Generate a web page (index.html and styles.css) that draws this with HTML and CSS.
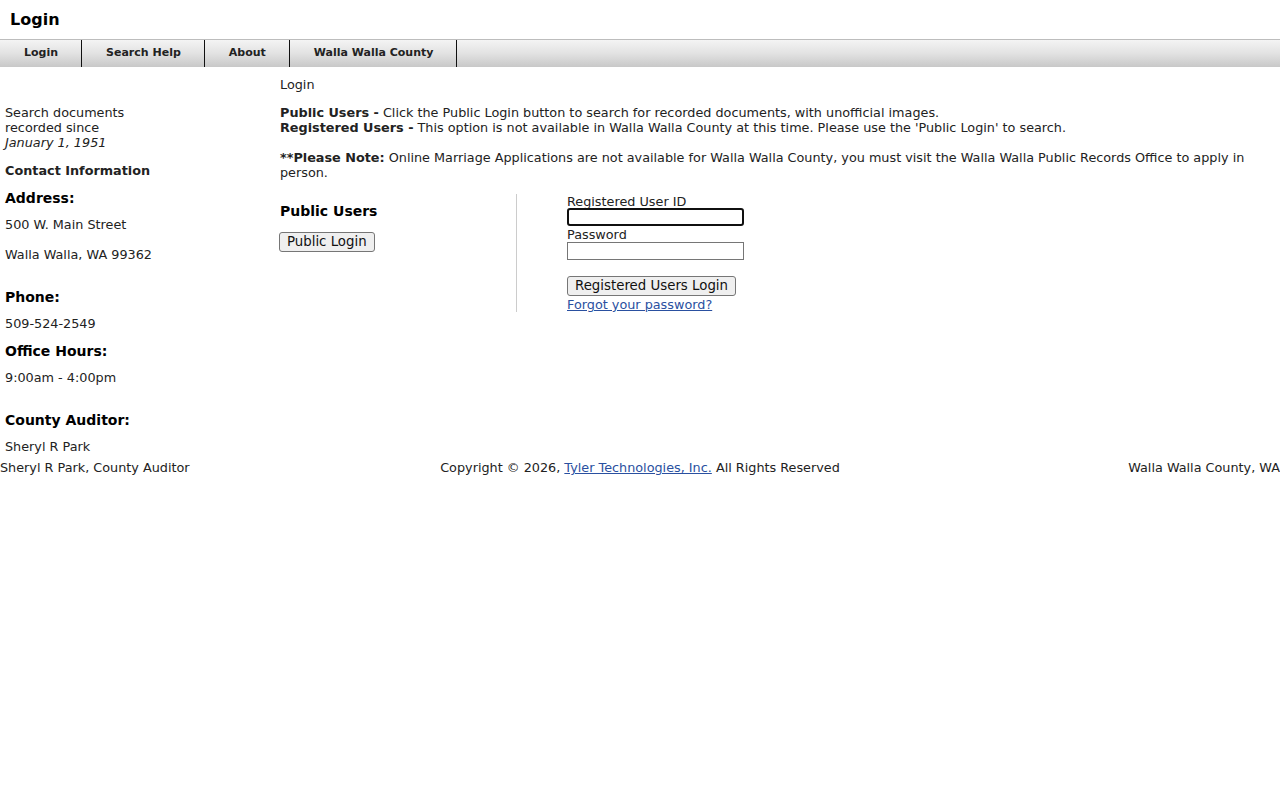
FILE: index.html
```html
<!DOCTYPE html>
<html>
<head>
    <title>Login</title>
    <link rel="stylesheet" href="styles.css">
</head>
<body>
    <div class="page-title">Login</div>
    <ul class="nav">
        <li>Login</li>
        <li>Search Help</li>
        <li>About</li>
        <li>Walla Walla County</li>
    </ul>
    <div class="layout">
        <div class="sidebar">
            <p class="since">Search documents<br>recorded since<br><i>January 1, 1951</i></p>
            <p class="contact">Contact Information</p>
            <h3 class="h-address">Address:</h3>
            <p class="info">500 W. Main Street</p>
            <p class="info">Walla Walla, WA 99362</p>
            <h3 class="h-phone">Phone:</h3>
            <p class="info">509-524-2549</p>
            <h3 class="h-hours">Office Hours:</h3>
            <p class="info">9:00am - 4:00pm</p>
            <h3 class="h-auditor">County Auditor:</h3>
            <p class="info">Sheryl R Park</p>
        </div>
        <div class="main">
            <div class="crumb">Login</div>
            <p class="intro">
                <b>Public Users -</b> Click the Public Login button to search for recorded documents, with unofficial images.<br>
                <b>Registered Users -</b> This option is not available in Walla Walla County at this time. Please use the 'Public Login' to search.<br>
                <br>
                <b>**Please Note:</b> Online Marriage Applications are not available for Walla Walla County, you must visit the Walla Walla Public Records Office to apply in person.
            </p>
            <div class="login-box">
                <div class="public-col">
                    <h3>Public Users</h3>
                    <button class="btn btn-public">Public Login</button>
                </div>
                <div class="registered-col">
                    <label for="userid">Registered User ID</label>
                    <input type="text" id="userid" class="field focused">
                    <label for="pass">Password</label>
                    <input type="password" id="pass" class="field">
                    <button class="btn btn-reg">Registered Users Login</button>
                    <a href="#" class="forgot">Forgot your password?</a>
                </div>
            </div>
        </div>
    </div>
    <div class="footer">
        <span class="foot-left">Sheryl R Park, County Auditor</span>
        <span class="copy">Copyright &copy; 2026, <a href="#">Tyler Technologies, Inc.</a> All Rights Reserved</span>
        <span class="foot-right">Walla Walla County, WA</span>
    </div>
</body>
</html>
```

FILE: styles.css
```css
body {
    margin: 0;
    font-family: "DejaVu Sans", Verdana, sans-serif;
    font-size: 12.8px;
    line-height: 15px;
    color: #222;
    background-color: #fff;
}

.page-title {
    font-size: 16px;
    font-weight: bold;
    color: #000;
    padding: 10px 10px 0 10px;
    height: 39px;
    line-height: 19px;
    box-sizing: border-box;
}

.nav {
    list-style: none;
    margin: 0;
    padding: 0;
    display: flex;
    height: 28px;
    box-sizing: border-box;
    border-top: 1px solid #bdbdbd;
    background: linear-gradient(to bottom, #f4f4f4 0%, #e2e2e2 50%, #c8c8c8 100%);
}

.nav li {
    padding: 0 23px 0 24px;
    font-size: 11px;
    font-weight: bold;
    color: #222;
    line-height: 26px;
    border-right: 1px solid #111;
}

.layout {
    display: flex;
}

.sidebar {
    width: 275px;
    padding-left: 5px;
    flex-shrink: 0;
}

.sidebar p,
.sidebar h3 {
    margin: 0;
}

.sidebar .since {
    margin-top: 38px;
}

.sidebar .contact {
    font-weight: bold;
    margin-top: 13px;
}

.sidebar h3 {
    font-size: 14px;
    line-height: 18px;
    color: #000;
}

.sidebar .info {
    margin-top: 10px;
}

.sidebar .info + .info {
    margin-top: 15px;
}

.sidebar .h-address {
    margin-top: 11px;
}

.sidebar .h-phone {
    margin-top: 26px;
}

.sidebar .h-hours {
    margin-top: 11px;
}

.sidebar .h-auditor {
    margin-top: 26px;
}

.main {
    flex: 1;
    padding-top: 10px;
    padding-right: 20px;
}

.crumb {
    margin-bottom: 13px;
}

.intro {
    margin: 0;
}

.login-box {
    display: flex;
    margin-top: 14px;
}

.public-col {
    width: 236px;
    border-right: 1px solid #ccc;
    padding-top: 8px;
}

.public-col h3 {
    margin: 0 0 12px 0;
    font-size: 14px;
    line-height: 18px;
    color: #000;
}

.btn {
    font-family: "DejaVu Sans", Verdana, sans-serif;
    font-size: 13.33px;
    color: #111;
    background-color: #efefef;
    border: 1px solid #767676;
    border-radius: 3px;
    padding: 1px 7px;
    height: 20px;
    line-height: 16px;
}

.btn-public {
    margin-left: -1px;
}

.registered-col {
    padding-left: 50px;
    display: flex;
    flex-direction: column;
    align-items: flex-start;
}

.registered-col label {
    line-height: 15px;
}

.field {
    width: 177px;
    height: 18px;
    box-sizing: border-box;
    border: 1px solid #767676;
    margin: 0;
    padding: 1px 2px;
}

.field.focused {
    border: 2px solid #101010;
    border-radius: 3px;
    margin-top: -1px;
    margin-bottom: 1px;
}

.btn-reg {
    margin-top: 16px;
}

.forgot {
    color: #2a50a0;
    margin-top: 1px;
}

.footer {
    display: grid;
    grid-template-columns: 1fr auto 1fr;
    margin-top: 6px;
    line-height: 15px;
}

.foot-right {
    text-align: right;
}

.copy a {
    color: #2a50a0;
}
```
